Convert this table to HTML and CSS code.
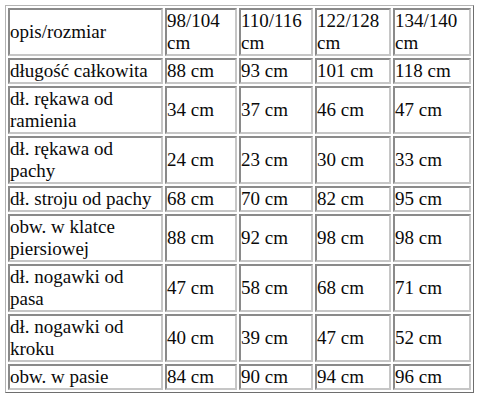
FILE: index.html
```html
<!DOCTYPE html>
<html lang="pl">
<head>
<meta charset="utf-8">
<link rel="stylesheet" href="styles.css">
</head>
<body>
<table class="sizes">
  <tr>
    <td class="c1">opis/rozmiar</td>
    <td class="c2">98/104 cm</td>
    <td class="c3">110/116 cm</td>
    <td class="c4">122/128 cm</td>
    <td class="c5">134/140 cm</td>
  </tr>
  <tr>
    <td>długość całkowita</td>
    <td>88 cm</td>
    <td>93 cm</td>
    <td>101 cm</td>
    <td>118 cm</td>
  </tr>
  <tr>
    <td>dł. rękawa od ramienia</td>
    <td>34 cm</td>
    <td>37 cm</td>
    <td>46 cm</td>
    <td>47 cm</td>
  </tr>
  <tr>
    <td>dł. rękawa od pachy</td>
    <td>24 cm</td>
    <td>23 cm</td>
    <td>30 cm</td>
    <td>33 cm</td>
  </tr>
  <tr>
    <td>dł. stroju od pachy</td>
    <td>68 cm</td>
    <td>70 cm</td>
    <td>82 cm</td>
    <td>95 cm</td>
  </tr>
  <tr>
    <td>obw. w klatce piersiowej</td>
    <td>88 cm</td>
    <td>92 cm</td>
    <td>98 cm</td>
    <td>98 cm</td>
  </tr>
  <tr>
    <td>dł. nogawki od pasa</td>
    <td>47 cm</td>
    <td>58 cm</td>
    <td>68 cm</td>
    <td>71 cm</td>
  </tr>
  <tr>
    <td>dł. nogawki od kroku</td>
    <td>40 cm</td>
    <td>39 cm</td>
    <td>47 cm</td>
    <td>52 cm</td>
  </tr>
  <tr>
    <td>obw. w pasie</td>
    <td>84 cm</td>
    <td>90 cm</td>
    <td>94 cm</td>
    <td>96 cm</td>
  </tr>
</table>
</body>
</html>
```
FILE: styles.css
```css
html, body {
  margin: 0;
  padding: 0;
  background: #ffffff;
}

body {
  padding: 5px 0 0 5px;
  font-family: "Liberation Serif", "Times New Roman", serif;
  font-size: 19px;
  color: #0a0a0a;
}

.sizes {
  table-layout: fixed;
  border-collapse: separate;
  border-spacing: 2px;
  border: 1px solid;
  border-color: #b4b4b4 #6e6e6e #6e6e6e #b4b4b4;
  width: 469px;
}

.sizes td {
  box-sizing: border-box;
  border: 2px solid;
  border-color: #8a8a8a #c6c6c6 #c6c6c6 #8a8a8a;
  padding: 0;
  line-height: 22px;
  vertical-align: middle;
  text-align: left;
}

.c1 { width: 155px; }
.c2 { width: 72px; }
.c3 { width: 74px; }
.c4 { width: 76px; }
.c5 { width: 78px; }
```
